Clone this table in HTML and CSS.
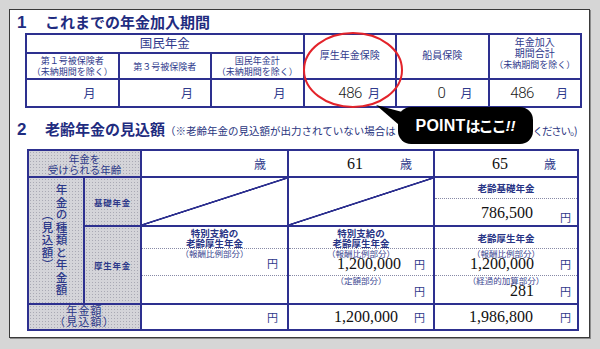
FILE: index.html
```html
<!DOCTYPE html>
<html lang="ja">
<head>
<meta charset="utf-8">
<title>年金定期便</title>
<link rel="stylesheet" href="styles.css">
</head>
<body>
<div class="panel">
  <h2 class="sec-title"><span class="num">1</span>これまでの年金加入期間</h2>
  <div class="t1">
    <div class="kokumin">国民年金</div>
    <div class="hd kosei">厚生年金保険</div>
    <div class="hd senin">船員保険</div>
    <div class="hd gokei"><span class="l1">年金加入</span><span class="l1">期間合計</span><span class="l2">（未納期間を除く）</span></div>
    <div class="sub">第１号被保険者<br>（未納期間を除く）</div>
    <div class="sub">第３号被保険者</div>
    <div class="sub">国民年金計<br>（未納期間を除く）</div>
    <div class="val v1"><span class="tsuki">月</span></div>
    <div class="val v2"><span class="tsuki">月</span></div>
    <div class="val v3"><span class="tsuki">月</span></div>
    <div class="val v4"><span class="dig">486</span><span class="tsuki">月</span></div>
    <div class="val v5"><span class="dig">0</span><span class="tsuki">月</span></div>
    <div class="val v6"><span class="dig">486</span><span class="tsuki">月</span></div>
  </div>

  <h2 class="sec-title sec2"><span class="num">2</span>老齢年金の見込額<span class="note">（※老齢年金の見込額が出力されていない場合は<span class="gap"></span><span class="note-end">ください。)</span></span></h2>
  <div class="t2">
    <div class="lab age">年金を<br>受けられる年齢</div>
    <div class="agec"><span class="n"></span><span class="sai">歳</span></div>
    <div class="agec"><span class="n">61</span><span class="sai">歳</span></div>
    <div class="agec"><span class="n">65</span><span class="sai">歳</span></div>

    <div class="lab kinds"><span class="vt">年金の種類と年金額</span><span class="vt">（見込額）</span></div>
    <div class="lab inner">基礎年金</div>
    <div class="diag"></div>
    <div class="diag"></div>
    <div class="kiso">
      <div class="kh1">老齢基礎年金</div>
      <div class="kv"><span class="num2">786,500</span><span class="yen">円</span></div>
    </div>

    <div class="lab inner">厚生年金</div>
    <div class="kc cc">
      <div class="kh">特別支給の<br>老齢厚生年金</div>
      <div class="km"><span class="sm">（報酬比例部分）</span><div class="vl"><span class="yen">円</span></div></div>
      <div class="kb"></div>
    </div>
    <div class="kc cd">
      <div class="kh">特別支給の<br>老齢厚生年金</div>
      <div class="km"><span class="sm">（報酬比例部分）</span><div class="vl"><span class="num2">1,200,000</span><span class="yen">円</span></div></div>
      <div class="kb"><span class="sm">（定額部分）</span><div class="vl"><span class="yen">円</span></div></div>
    </div>
    <div class="kc ce">
      <div class="kh">老齢厚生年金</div>
      <div class="km"><span class="sm">（報酬比例部分）</span><div class="vl"><span class="num2">1,200,000</span><span class="yen">円</span></div></div>
      <div class="kb"><span class="sm">（経過的加算部分）</span><div class="vl"><span class="num2">281</span><span class="yen">円</span></div></div>
    </div>

    <div class="lab total"><span class="tl1">年金額</span><span class="tl2">（見込額）</span></div>
    <div class="tot"><span class="yen">円</span></div>
    <div class="tot cd"><span class="num2">1,200,000</span><span class="yen">円</span></div>
    <div class="tot ce"><span class="num2">1,986,800</span><span class="yen">円</span></div>
  </div>

  <svg class="overlay" width="579" height="327" viewBox="0 0 579 327">
    <ellipse cx="343" cy="60" rx="49" ry="37" fill="none" stroke="#e3232a" stroke-width="2"/>
    <polygon points="366,95 396,103 396,121" fill="#000"/>
  </svg>
  <div class="bubble"><span class="pt">POINT</span><span class="kana">はここ</span><span class="ex">!!</span></div>
</div>
</body>
</html>
```

FILE: styles.css
```css
* {
  box-sizing: border-box;
  margin: 0;
  padding: 0;
}

body {
  width: 600px;
  height: 349px;
  overflow: hidden;
  background: #d6d6d6;
  font-family: "Noto Sans CJK JP", "Liberation Sans", sans-serif;
  color: #283485;
}

.panel {
  position: relative;
  margin: 9px 0 0 9px;
  width: 581px;
  height: 329px;
  border: 1px solid #3a3a3a;
  background: #fff;
  box-shadow: 1px 1px 0 #8c8c8c;
}

.sec-title {
  height: 23px;
  padding-left: 7px;
  font-size: 15px;
  font-weight: 700;
  line-height: 23px;
  color: #1f2c80;
  white-space: nowrap;
}

.sec-title .num {
  display: inline-block;
  width: 28px;
  font-family: "Liberation Sans", sans-serif;
  font-size: 17px;
}

.sec2 {
  height: 41px;
  padding-top: 10px;
  line-height: 22px;
}

.note {
  font-size: 10.5px;
  font-weight: 400;
  color: #2a3580;
}

.note .gap {
  display: inline-block;
  width: 137px;
}

.note-end {
  letter-spacing: -1.2px;
}

/* ---------- table 1 ---------- */
.t1 {
  display: grid;
  width: 557px;
  margin-left: 15px;
  grid-template-columns: repeat(6, 1fr);
  grid-template-rows: 19px 26px 28px;
  border-top: 2px solid #2d308f;
  border-left: 2px solid #2d308f;
}

.t1 > div {
  display: flex;
  flex-direction: column;
  align-items: center;
  justify-content: center;
  text-align: center;
  border-right: 2px solid #2d308f;
  border-bottom: 2px solid #2d308f;
  color: #2f3a8c;
}

.t1 .kokumin {
  grid-column: 1 / 4;
  font-size: 12.5px;
  line-height: 1;
}

.t1 .hd {
  grid-row: 1 / 3;
  font-size: 10px;
  padding-bottom: 4px;
}

.t1 .kosei { grid-column: 4; }
.t1 .senin { grid-column: 5; }

.t1 .gokei {
  grid-column: 6;
  justify-content: flex-start;
  padding-top: 1px;
}

.gokei .l1 {
  line-height: 11px;
}

.gokei .l2 {
  font-size: 9px;
  line-height: 14px;
}

.t1 .sub {
  font-size: 9px;
  line-height: 11px;
}

.t1 .val {
  flex-direction: row;
  justify-content: flex-end;
  align-items: center;
  padding-right: 15px;
}

.t1 .v1 { padding-right: 22px; }
.t1 .v2, .t1 .v3 { padding-right: 17px; }
.t1 .v6 { padding-right: 12px; }

.tsuki {
  font-size: 12px;
  line-height: 1;
  color: #2f3a8c;
}

.dig {
  font-family: "Roboto", "Liberation Sans", sans-serif;
  font-weight: 300;
  font-size: 15px;
  letter-spacing: -0.4px;
  line-height: 1;
  color: #1a1a1a;
}

.v4 .dig { margin-right: 6px; }
.v5 .dig { margin-right: 15px; }
.v6 .dig { margin-right: 22px; }

/* ---------- table 2 ---------- */
.t2 {
  display: grid;
  width: 552px;
  margin-left: 17px;
  grid-template-columns: 56px 57px 147px 146px 144px;
  grid-template-rows: 27px 49px 78px 26px;
  border-top: 2px solid #2d308f;
  border-left: 2px solid #2d308f;
}

.t2 > div {
  border-right: 2px solid #2d308f;
  border-bottom: 2px solid #2d308f;
}

.lab {
  background-color: #d4d4d9;
  background-image: radial-gradient(circle, #a9a9b4 0.6px, transparent 0.9px);
  background-size: 3px 3px;
  color: #2c3889;
  display: flex;
  align-items: center;
  justify-content: center;
  text-align: center;
}

.lab.age {
  grid-column: 1 / 3;
  font-size: 10.5px;
  line-height: 11px;
}

.agec {
  display: grid;
  grid-template-columns: 1fr auto 1fr;
  align-items: center;
}

.agec .n {
  grid-column: 2;
  font-family: "Liberation Serif", serif;
  font-size: 16px;
  color: #111;
  margin-right: 12px;
}

.agec .sai {
  grid-column: 3;
  justify-self: end;
  padding-right: 21px;
  font-size: 12px;
  color: #2f3a8c;
}

.lab.kinds {
  grid-row: span 2;
  flex-direction: row-reverse;
  gap: 1px;
  padding-right: 4px;
}

.vt {
  writing-mode: vertical-rl;
  font-size: 11.5px;
  line-height: 13px;
  letter-spacing: 1px;
  font-weight: 500;
}

.lab.inner {
  font-size: 8.5px;
  font-weight: 700;
  letter-spacing: 0.8px;
}

.diag {
  background: linear-gradient(to top left, transparent calc(50% - 1.2px), #2d308f calc(50% - 0.6px), #2d308f calc(50% + 0.6px), transparent calc(50% + 1.2px));
}

.kiso {
  display: grid;
  grid-template-rows: 21px 1fr;
}

.kh1 {
  border-bottom: 1px dotted #8789a6;
  font-size: 9.5px;
  font-weight: 700;
  display: flex;
  align-items: center;
  justify-content: center;
}

.kv {
  display: flex;
  justify-content: flex-end;
  align-items: flex-end;
  padding-right: 6px;
}

.kv .num2 {
  line-height: 10px;
  margin-bottom: 7px;
  margin-right: 27px;
}

.kv .yen {
  line-height: 11px;
  margin-bottom: 2px;
}

.num2 {
  font-family: "Liberation Serif", serif;
  font-size: 16px;
  color: #111;
}

.yen {
  font-size: 11px;
  color: #2f3a8c;
}

.kc {
  display: grid;
  grid-template-rows: 22px 27px 1fr;
}

.kh {
  border-bottom: 1px dotted #8789a6;
  font-size: 9.5px;
  font-weight: 700;
  line-height: 10px;
  display: flex;
  align-items: center;
  justify-content: center;
  text-align: center;
}

.km {
  border-bottom: 1px dotted #8789a6;
}

.km, .kb {
  display: flex;
  flex-direction: column;
}

.sm {
  font-size: 8.5px;
  line-height: 9px;
  text-align: center;
  color: #3a4590;
}

.vl {
  display: flex;
  justify-content: flex-end;
  align-items: center;
  height: 10px;
  line-height: 10px;
  padding-right: 9px;
  margin-top: 1px;
}

.cc .vl { margin-top: 0; }

.vl .num2 {
  line-height: 10px;
}

.cd .vl { padding-right: 8px; }
.cd .vl .num2 { margin-right: 13px; }

.ce .vl { padding-right: 6px; }
.ce .vl .num2 { margin-right: 26px; }

.lab.total {
  grid-column: 1 / 3;
  flex-direction: column;
  font-size: 11px;
  line-height: 11px;
  letter-spacing: 1.2px;
  padding-bottom: 3px;
}

.tot {
  display: flex;
  justify-content: flex-end;
  align-items: center;
  padding-right: 9px;
}

.tot.cd { padding-right: 8px; }
.tot.cd .num2 { margin-right: 16px; }
.tot.ce { padding-right: 6px; }
.tot.ce .num2 { margin-right: 27px; }

/* ---------- overlays ---------- */
.overlay {
  position: absolute;
  left: 0;
  top: 0;
  pointer-events: none;
}

.bubble {
  position: absolute;
  left: 388px;
  top: 97px;
  width: 135px;
  height: 37px;
  border-radius: 13px;
  background: #000;
  color: #fff;
  display: flex;
  align-items: center;
  justify-content: center;
  font-size: 15px;
  font-weight: 700;
  white-space: nowrap;
}

.bubble .pt {
  font-family: "Liberation Sans", sans-serif;
  font-size: 16px;
  letter-spacing: 0.2px;
}

.bubble .kana {
  letter-spacing: -2px;
}

.bubble .ex {
  font-family: "Liberation Sans", sans-serif;
  font-style: italic;
  font-size: 15px;
  margin-left: 1px;
}
```
